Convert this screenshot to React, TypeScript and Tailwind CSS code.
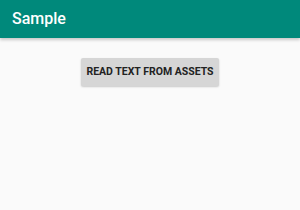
export default function App() {
  return (
    <div className="w-[300px] h-[210px] bg-[#fafafa] flex flex-col" style={{ fontFamily: 'Roboto, "Liberation Sans", sans-serif' }}>
      <div className="h-[38px] bg-[#00897b] flex items-center px-3 shadow-[0_2px_3px_rgba(0,0,0,0.2)]">
        <span className="text-white text-[16px] font-medium">Sample</span>
      </div>
      <div className="flex justify-center pt-5">
        <button className="h-[28px] w-[138px] bg-[#d6d6d6] rounded-[2px] shadow-[0_1px_2px_rgba(0,0,0,0.2)] text-[10.5px] font-bold text-[#222]">
          READ TEXT FROM ASSETS
        </button>
      </div>
    </div>
  );
}
